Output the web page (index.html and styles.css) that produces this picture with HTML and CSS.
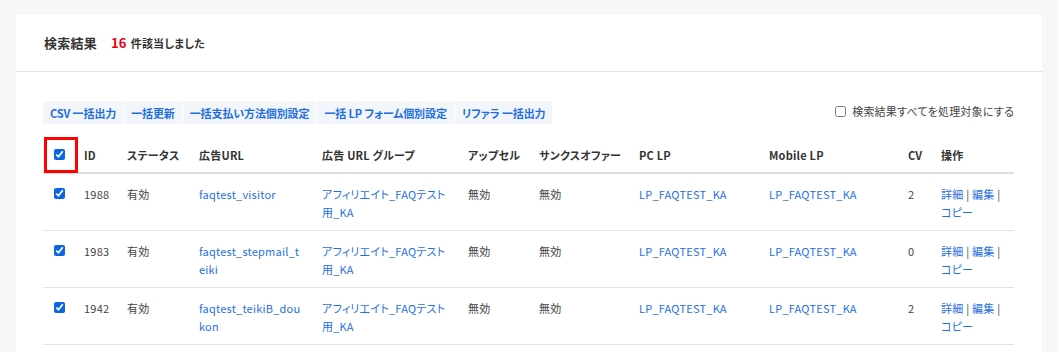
FILE: index.html
```html
<!DOCTYPE html>
<html lang="ja">
<head>
    <meta charset="UTF-8">
    <title>検索結果</title>
    <link rel="stylesheet" href="styles.css">
</head>
<body>
    <div class="card">
        <div class="card-header">
            <span class="title">検索結果</span>
            <span class="count">16</span>
            <span class="count-text">件該当しました</span>
        </div>

        <div class="card-body">
            <div class="toolbar">
                <div class="actions">
                    <button type="button">CSV 一括出力</button>
                    <button type="button">一括更新</button>
                    <button type="button">一括支払い方法個別設定</button>
                    <button type="button">一括 LP フォーム個別設定</button>
                    <button type="button">リファラ 一括出力</button>
                </div>
                <label class="select-all">
                    <input type="checkbox">
                    検索結果すべてを処理対象にする
                </label>
            </div>

            <table class="result-table">
                <colgroup>
                    <col style="width: 30px">
                    <col style="width: 43px">
                    <col style="width: 72px">
                    <col style="width: 123px">
                    <col style="width: 146px">
                    <col style="width: 71px">
                    <col style="width: 100px">
                    <col style="width: 130px">
                    <col style="width: 139px">
                    <col style="width: 33px">
                    <col>
                </colgroup>
                <thead>
                    <tr>
                        <th class="check-cell">
                            <input type="checkbox" checked>
                            <span class="highlight"></span>
                        </th>
                        <th>ID</th>
                        <th>ステータス</th>
                        <th>広告URL</th>
                        <th>広告 URL グループ</th>
                        <th>アップセル</th>
                        <th>サンクスオファー</th>
                        <th>PC LP</th>
                        <th>Mobile LP</th>
                        <th>CV</th>
                        <th>操作</th>
                    </tr>
                </thead>
                <tbody>
                    <tr>
                        <td class="check-cell"><input type="checkbox" checked></td>
                        <td>1988</td>
                        <td>有効</td>
                        <td><a href="#">faqtest_visitor</a></td>
                        <td><a href="#">アフィリエイト_FAQテスト用_KA</a></td>
                        <td>無効</td>
                        <td>無効</td>
                        <td><a href="#">LP_FAQTEST_KA</a></td>
                        <td><a href="#">LP_FAQTEST_KA</a></td>
                        <td>2</td>
                        <td class="ops"><a href="#">詳細</a> | <a href="#">編集</a> | <a href="#">コピー</a></td>
                    </tr>
                    <tr>
                        <td class="check-cell"><input type="checkbox" checked></td>
                        <td>1983</td>
                        <td>有効</td>
                        <td><a href="#">faqtest_stepmail_teiki</a></td>
                        <td><a href="#">アフィリエイト_FAQテスト用_KA</a></td>
                        <td>無効</td>
                        <td>無効</td>
                        <td><a href="#">LP_FAQTEST_KA</a></td>
                        <td><a href="#">LP_FAQTEST_KA</a></td>
                        <td>0</td>
                        <td class="ops"><a href="#">詳細</a> | <a href="#">編集</a> | <a href="#">コピー</a></td>
                    </tr>
                    <tr>
                        <td class="check-cell"><input type="checkbox" checked></td>
                        <td>1942</td>
                        <td>有効</td>
                        <td><a href="#">faqtest_teikiB_doukon</a></td>
                        <td><a href="#">アフィリエイト_FAQテスト用_KA</a></td>
                        <td>無効</td>
                        <td>無効</td>
                        <td><a href="#">LP_FAQTEST_KA</a></td>
                        <td><a href="#">LP_FAQTEST_KA</a></td>
                        <td>2</td>
                        <td class="ops"><a href="#">詳細</a> | <a href="#">編集</a> | <a href="#">コピー</a></td>
                    </tr>
                </tbody>
            </table>
        </div>
    </div>
</body>
</html>
```

FILE: styles.css
```css
:root {
    --bg-color: #f5f7f9;
    --card-bg: #ffffff;
    --text-color: #444444;
    --heading-color: #333333;
    --link-color: #1f6fdf;
    --border-color: #e2e2e2;
    --button-bg: #f2f5f9;
    --alert-color: #e60012;
}

* {
    margin: 0;
    padding: 0;
    box-sizing: border-box;
}

body {
    font-family: "Noto Sans CJK JP", "Noto Sans", sans-serif;
    font-size: 11px;
    line-height: 18px;
    font-feature-settings: "palt";
    letter-spacing: 0.02em;
    color: var(--text-color);
    background-color: var(--bg-color);
    padding: 14px 16px 0;
}

a {
    color: var(--link-color);
    text-decoration: none;
}

.card {
    background-color: var(--card-bg);
    border-radius: 4px;
    box-shadow: 0 0 2px rgba(0, 0, 0, 0.04);
    min-height: 400px;
}

.card-header {
    height: 58px;
    padding: 0 28px;
    display: flex;
    align-items: center;
    border-bottom: 1px solid var(--border-color);
    font-weight: 700;
    color: var(--heading-color);
}

.title {
    font-size: 13px;
    margin-right: 14px;
}

.count {
    font-size: 13px;
    color: var(--alert-color);
    margin-right: 4px;
}

.card-body {
    padding: 29px 28px 0 27px;
}

.toolbar {
    display: flex;
    justify-content: space-between;
    align-items: flex-start;
    margin-bottom: 14px;
}

.actions {
    display: flex;
    gap: 1px;
}

.actions button {
    font-family: inherit;
    font-size: 11px;
    font-weight: 700;
    font-feature-settings: "palt";
    letter-spacing: -0.01em;
    color: var(--link-color);
    background-color: var(--button-bg);
    border: none;
    height: 23px;
    padding: 0 7px;
    cursor: pointer;
}

.select-all {
    display: flex;
    align-items: center;
    gap: 6px;
    margin-top: 1px;
    color: var(--text-color);
}

.select-all input {
    width: 11px;
    height: 11px;
    margin: 0;
}

.result-table {
    width: 100%;
    border-collapse: collapse;
    table-layout: fixed;
}

.result-table th,
.result-table td {
    text-align: left;
    vertical-align: top;
    padding: 8px 4px 8px 11px;
    word-break: break-all;
}

.result-table th {
    font-weight: 700;
    color: var(--heading-color);
    border-bottom: 2px solid #dddddd;
    white-space: nowrap;
}

.result-table td {
    padding: 11px 6px 9px 11px;
    border-bottom: 1px solid var(--border-color);
}

.result-table input[type="checkbox"] {
    width: 11px;
    height: 11px;
    margin: 3px 0 0;
    accent-color: #0a66e4;
    vertical-align: top;
}

.check-cell {
    position: relative;
}

.highlight {
    position: absolute;
    left: 1px;
    top: -1px;
    width: 34px;
    height: 36px;
    border: 3px solid #ff0000;
}

.ops {
    word-break: normal;
}
```
